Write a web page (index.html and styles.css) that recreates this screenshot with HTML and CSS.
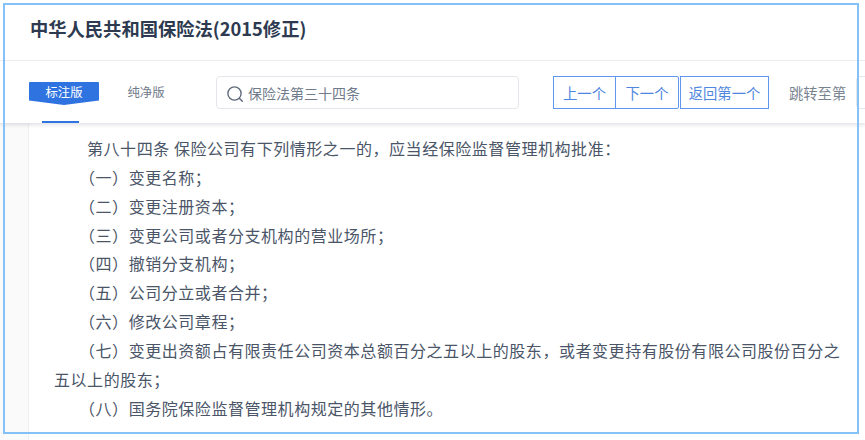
FILE: index.html
```html
<!DOCTYPE html>
<html lang="zh-CN">
<head>
    <meta charset="UTF-8">
    <title>中华人民共和国保险法(2015修正)</title>
    <link rel="stylesheet" href="styles.css">
</head>
<body>
    <!-- Title -->
    <header class="title-bar">
        <h1>中华人民共和国保险法(2015修正)</h1>
    </header>

    <!-- Toolbar -->
    <nav class="toolbar">
        <div class="tabs">
            <div class="tab tab-active"><span class="tab-label">标注版</span></div>
            <div class="tab"><span class="tab-label">纯净版</span></div>
        </div>
        <div class="search">
            <svg class="search-icon" width="18" height="18" viewBox="0 0 18 18" fill="none" stroke="#5f6b7c" stroke-width="1.4">
                <circle cx="8.5" cy="8.5" r="6.6"/>
                <path d="M13.3 13.3l3 3" stroke-linecap="round"/>
            </svg>
            <span>保险法第三十四条</span>
        </div>
        <div class="pager">
            <button class="pager-btn btn-prev">上一个</button>
            <button class="pager-btn btn-next">下一个</button>
            <button class="pager-btn btn-first">返回第一个</button>
        </div>
        <span class="jump-label">跳转至第</span>
        <div class="jump-input"></div>
    </nav>

    <!-- Article -->
    <main class="content">
        <article class="article">
            <p>第八十四条 保险公司有下列情形之一的，应当经保险监督管理机构批准：</p>
            <p>（一）变更名称；</p>
            <p>（二）变更注册资本；</p>
            <p>（三）变更公司或者分支机构的营业场所；</p>
            <p>（四）撤销分支机构；</p>
            <p>（五）公司分立或者合并；</p>
            <p>（六）修改公司章程；</p>
            <p>（七）变更出资额占有限责任公司资本总额百分之五以上的股东，或者变更持有股份有限公司股份百分之五以上的股东；</p>
            <p>（八）国务院保险监督管理机构规定的其他情形。</p>
        </article>
    </main>

    <!-- Selection frame drawn over the page -->
    <div class="frame"></div>
</body>
</html>
```

FILE: styles.css
```css
* {
    margin: 0;
    padding: 0;
    box-sizing: border-box;
    font-family: "Noto Sans CJK SC", "Liberation Sans", sans-serif;
}

html,
body {
    height: 440px;
    overflow: hidden;
}

body {
    position: relative;
    background-color: #fafafa;
    color: #4a5568;
}

/* Title */
.title-bar {
    height: 61px;
    padding: 14px 0 0 30px;
    background-color: #fff;
    border-bottom: 1px solid #eeeff2;
}

.title-bar h1 {
    font-size: 18.3px;
    line-height: 28px;
    font-weight: 700;
    color: #2d3a50;
}

/* Toolbar */
.toolbar {
    position: relative;
    display: flex;
    align-items: flex-start;
    height: 62px;
    padding: 15px 0 0 29px;
    background-color: #fff;
    box-shadow: 0 2px 4px rgba(60, 70, 100, 0.16);
    white-space: nowrap;
    overflow: hidden;
}

.tabs {
    display: flex;
    flex: none;
    height: 47px;
}

.tab {
    display: flex;
    flex-direction: column;
    align-items: center;
    width: 70px;
    margin-right: 17px;
    font-size: 12.4px;
    color: #6f7a8a;
}

.tab + .tab {
    margin-left: -5px;
    margin-right: 22px;
}

.tab-label {
    width: 70px;
    height: 23px;
    margin-top: 6px;
    line-height: 20px;
    text-align: center;
}

.tab-active {
    position: relative;
    color: #fff;
}

.tab-active .tab-label {
    background-color: #2f73e0;
    border-radius: 1px;
    clip-path: polygon(0 0, 100% 0, 100% 80%, 50% 100%, 0 80%);
}

.tab-active::after {
    content: "";
    position: absolute;
    left: 13px;
    bottom: 0;
    width: 37px;
    height: 2px;
    background-color: #2f73e0;
}

.search {
    display: flex;
    flex: none;
    align-items: center;
    gap: 4px;
    width: 303px;
    height: 33px;
    margin-left: 13px;
    padding-left: 9px;
    border: 1px solid #e3e6ea;
    border-radius: 4px;
    font-size: 14px;
    color: #6f7a8a;
}

.search-icon {
    margin-top: 2px;
}

.pager {
    display: flex;
    flex: none;
    margin-left: 34px;
}

.pager-btn {
    height: 33px;
    background-color: #fff;
    border: 1px solid #5f97ec;
    color: #4f86e0;
    font-size: 14.3px;
}

.btn-prev {
    width: 63px;
}

.btn-next {
    width: 64px;
    margin-left: -1px;
    border-radius: 0 2px 2px 0;
}

.btn-first {
    width: 89px;
    margin-left: 1px;
}

.jump-label {
    margin-left: 20px;
    font-size: 14.3px;
    line-height: 33px;
    color: #7a8491;
}

.jump-input {
    flex: none;
    width: 60px;
    height: 33px;
    margin-left: 10px;
    border: 1px solid #e3e6ea;
    border-radius: 4px;
}

/* Article */
.content {
    height: 317px;
    padding-left: 28px;
}

.article {
    height: 100%;
    padding: 11px 0 0 25px;
    background-color: #fff;
    border-left: 1px solid #eeeff2;
    font-size: 16px;
    letter-spacing: 0.55px;
    color: #4a5568;
    text-spacing-trim: trim-start;
}

.article p {
    width: 795px;
    line-height: 28.85px;
    text-indent: 33px;
}

/* Overlay frame */
.frame {
    position: absolute;
    left: 3px;
    top: 3px;
    width: 856px;
    height: 431px;
    border: 2px solid #84c1f7;
    pointer-events: none;
}
```
